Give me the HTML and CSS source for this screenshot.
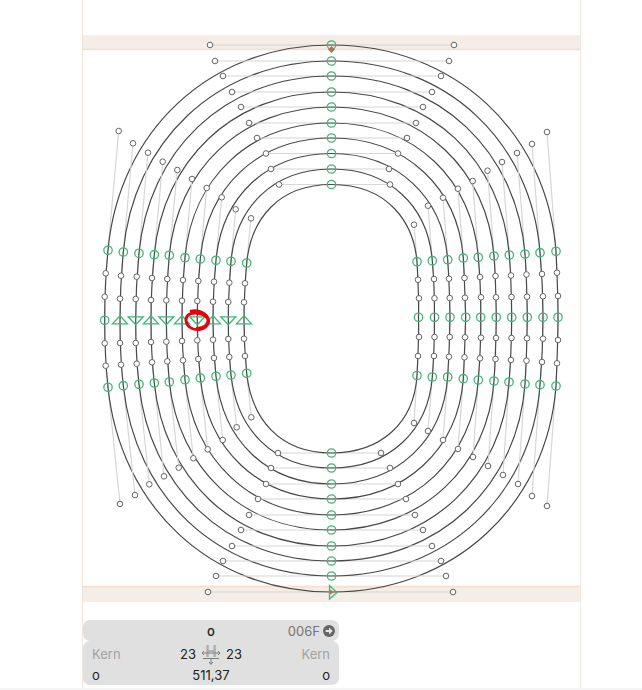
FILE: index.html
```html
<!DOCTYPE html>
<html lang="en">
<head>
<meta charset="utf-8">
<title>Glyph o</title>
<link rel="stylesheet" href="styles.css">
</head>
<body>
<main class="frame">
  <svg id="glyph" class="canvas" viewBox="83 0 497 620" width="497" height="620"></svg>
  <section class="info">
    <div class="panel panel-name">
      <span></span>
      <span class="glyph-name">o</span>
      <span class="unicode">006F
        <svg class="go" viewBox="0 0 12 12" width="12" height="12"><circle cx="6" cy="6" r="6"/><path d="M2.6 4.9H6V2.6L9.8 6 6 9.4V7.1H2.6z"/></svg>
      </span>
    </div>
    <div class="panel panel-metrics">
      <span class="kern">Kern</span>
      <span class="bearings">23
        <svg class="metric-icon" viewBox="0 0 22 22" width="22" height="22">
          <text class="metric-h" x="11" y="14" text-anchor="middle">H</text>
          <path class="metric-arrow" d="M2 10H20M4 8L2 10L4 12M18 8L20 10L18 12M3 15.500H19M11 15.500V21M9 19L11 21.500L13 19"/>
        </svg>
      23</span>
      <span class="kern kern-right">Kern</span>
      <span>o</span>
      <span class="width">511,37</span>
      <span class="right-name">o</span>
    </div>
  </section>
</main>
<div class="foot"></div>
<script src="script.js"></script>
</body>
</html>
```
FILE: styles.css
```css
html, body { margin: 0; padding: 0; background: #fff; }
body { width: 642px; height: 690px; overflow: hidden; font-family: Inter, "Liberation Sans", sans-serif; font-size: 13px; color: #222; }
.frame { width: 497px; height: 688px; margin-left: 82px; border-left: 1px solid #f6e6da; border-right: 1px solid #f6e6da; }
.canvas { display: block; }
.foot { height: 2px; background: #f5f5f5; }
.info { width: 256px; display: flex; flex-direction: column; }
.panel { background: #e0e0e0; border-radius: 7px; display: grid; grid-template-columns: 1fr auto 1fr; align-items: center; padding: 0 9px; }
.panel-name { height: 21px; }
.panel-metrics { height: 44px; grid-template-rows: 26px 16px; align-content: start; }
.glyph-name { font-weight: 500; }
.unicode { justify-self: end; display: flex; align-items: center; gap: 3px; color: #757575; margin-right: -5px; }
.go circle { fill: #666; }
.go path { fill: #e6e6e6; }
.kern { color: #a2a2a2; }
.kern-right { justify-self: end; }
.right-name { justify-self: end; }
.width { text-align: center; }
.bearings { display: flex; align-items: center; gap: 4px; }
.metric-icon { display: block; }
.metric-h { font: 700 16px "Liberation Sans", sans-serif; fill: #aeaeae; }
.metric-arrow { fill: none; stroke: #7d7d7d; stroke-width: 1; }
.band { fill: #f5ede6; }
.band-line { stroke: #f4dfcf; stroke-width: 1.5; }
.handle { stroke: #d6d6d6; stroke-width: 1.2; }
.contour { fill: none; stroke: #484848; stroke-width: 1.2; }
.off { fill: #fff; stroke: #666; stroke-width: 1; }
.node { fill: none; stroke: #3fb878; stroke-width: 1.3; }
.start { fill: #b8714f; }
.scribble { fill: none; stroke: #e8000d; stroke-width: 2.8; stroke-linecap: round; }
```
FILE: script.js
```js
var NS = 'http://www.w3.org/2000/svg';
var svg = document.getElementById('glyph');
function el(name, attrs) {
  var e = document.createElementNS(NS, name);
  for (var k in attrs) e.setAttribute(k, attrs[k]);
  svg.appendChild(e);
  return e;
}
function zip(xs, ys) { return xs.map(function (x, i) { return [x, ys[i]]; }); }
function line(a, b) { el('line', { 'class': 'handle', x1: a[0], y1: a[1], x2: b[0], y2: b[1] }); }
function c(a, b, d) { return 'C' + a.join(' ') + ' ' + b.join(' ') + ' ' + d.join(' '); }

var CX = 331.500;
var topY = [45, 61, 76, 92, 107, 123, 138, 153.500, 169, 184.500];
var botY = [592, 576, 561, 546, 530, 515, 499, 484, 468, 453];
var topL = [210, 215, 223, 232, 241, 249, 257, 266, 271, 279];
var topR = [454, 449, 441, 432, 423, 416, 407, 398, 389, 390];
var botL = [208, 216, 223, 232, 241, 249, 258, 266, 271, 278];
var botR = [453, 446, 441, 432, 423, 415, 406, 398, 390, 381];

var R = {
  sideT: zip([547, 532, 517, 502, 487.500, 472.700, 458, 443, 428, 414], [132, 144, 153, 162, 170.700, 181, 188.700, 197.700, 205.700, 224.700]),
  nodeT: zip([556, 540, 525, 509.300, 494, 478.300, 463.300, 447.700, 432.300, 417], [251.300, 252.700, 254, 255, 256, 257.300, 258, 259.700, 260.700, 261.700]),
  off1: zip([557, 542, 526.500, 511, 495.500, 480, 464.500, 449, 434, 418], [272.700, 274, 274.500, 275.500, 276, 277, 278, 278.700, 279, 279.700]),
  off2: zip([558, 543, 527, 511.500, 496, 481, 465, 449.700, 434.500, 419], [296, 296.300, 296.700, 297, 297.300, 297.300, 297.700, 298, 298.300, 298.300]),
  mid: zip([558, 543, 527.300, 511.700, 496.300, 480.700, 465.700, 450, 434.500, 418.500], [317.300, 317.300, 317.300, 317.300, 317.300, 317.300, 317.300, 317.300, 317.300, 317.300]),
  off3: zip([558, 543, 527, 511.500, 496, 481, 465, 449.700, 434.500, 419], [340, 338.700, 338.300, 338, 338, 337.700, 337.300, 337, 337, 337]),
  off4: zip([557, 542, 526.500, 511, 495.500, 480, 464.500, 449, 434, 418], [363.300, 362, 360.700, 360, 359, 358.300, 357.300, 356.700, 356, 356]),
  nodeB: zip([556, 540, 525, 509, 494, 478.300, 463.300, 447.700, 432.300, 417], [386, 384.700, 384, 382, 381, 380, 378.700, 377, 377, 375.500]),
  sideB: zip([547, 532, 518, 503, 488, 473, 458, 443, 428, 414], [506, 496, 484, 475, 466, 457, 449, 440, 431, 423])
};
var L = {
  sideT: zip([118.700, 133, 148, 162.700, 177.300, 192, 206.700, 221.700, 235.700, 251], [131, 143.300, 152.700, 161.700, 170, 179, 188, 197.300, 209.300, 218.300]),
  nodeT: zip([108, 123.300, 139, 154.300, 169.300, 185, 200.300, 216, 231, 246.700], [250.300, 252, 253.300, 254.700, 255.300, 257.700, 259, 260.300, 261.300, 263]),
  off1: zip([105.700, 121, 136.700, 152, 167.300, 183, 198.300, 214, 229.300, 245], [273.300, 275.700, 276.700, 278, 279, 280, 281, 281.700, 282.700, 283.300]),
  off2: zip([104.700, 120, 135.700, 151, 166.300, 182, 197.300, 213, 228.300, 244], [296.700, 298.700, 299, 300, 300.300, 300.700, 301, 301.700, 302, 302.300]),
  mid: zip([104.700, 120, 135.700, 151, 166.300, 182, 197.300, 213, 228.300, 244], [320.300, 320.300, 320.300, 320.300, 320.300, 320.300, 320.300, 320.300, 320.300, 320.300]),
  off3: zip([104.700, 120, 135.700, 151, 166.300, 182, 197.300, 213, 228.300, 244], [343.300, 343, 343, 342, 341.700, 341, 340.300, 339.700, 339, 338.700]),
  off4: zip([105.700, 121, 136.700, 152, 167.300, 183, 198.300, 214, 229.300, 245], [365.700, 364.700, 363.700, 362.300, 361.300, 360.300, 359, 358, 357, 356]),
  nodeB: zip([108, 123.300, 139, 154.300, 169.300, 185, 200.300, 216, 231, 246.700], [387.300, 385.700, 384.300, 383, 382, 379.700, 378, 376.300, 375, 373.300]),
  sideB: zip([120, 135, 149.300, 164, 178.700, 193.300, 207.700, 222.700, 236.700, 251.300], [504, 495, 484.300, 476.300, 467.700, 458.300, 449.300, 440, 427.300, 417.300])
};

/* metric bands */
el('rect', { 'class': 'band', x: 83, y: 35, width: 497, height: 15 });
el('rect', { 'class': 'band', x: 83, y: 586, width: 497, height: 16 });
el('line', { 'class': 'band-line', x1: 83, y1: 49.500, x2: 580, y2: 49.500 });
el('line', { 'class': 'band-line', x1: 83, y1: 586.500, x2: 580, y2: 586.500 });

var i, n = 10, off = [], nodes = [];
for (i = 0; i < n; i++) {
  var T = [CX, topY[i]], B = [CX, botY[i]];
  var tr = [topR[i], topY[i]], tl = [topL[i], topY[i]], br = [botR[i], botY[i]], bl = [botL[i], botY[i]];

  line(tl, tr); line(bl, br);
  [R, L].forEach(function (s) {
    line(s.sideT[i], s.nodeT[i]); line(s.nodeT[i], s.off1[i]); line(s.off2[i], s.mid[i]);
    line(s.mid[i], s.off3[i]); line(s.off4[i], s.nodeB[i]); line(s.nodeB[i], s.sideB[i]);
  });

  el('path', { 'class': 'contour', d: 'M' + T.join(' ') +
    c(tr, R.sideT[i], R.nodeT[i]) + c(R.off1[i], R.off2[i], R.mid[i]) +
    c(R.off3[i], R.off4[i], R.nodeB[i]) + c(R.sideB[i], br, B) +
    c(bl, L.sideB[i], L.nodeB[i]) + c(L.off4[i], L.off3[i], L.mid[i]) +
    c(L.off2[i], L.off1[i], L.nodeT[i]) + c(L.sideT[i], tl, T) + 'Z' });

  off.push(tl, tr, bl, br);
  [R, L].forEach(function (s) {
    off.push(s.sideT[i], s.off1[i], s.off2[i], s.off3[i], s.off4[i], s.sideB[i]);
    nodes.push(s.nodeT[i], s.nodeB[i]);
  });
  nodes.push(R.mid[i]);
  if (i > 0) nodes.push(B);
  nodes.push(T);
}
off.forEach(function (p) { el('circle', { 'class': 'off', cx: p[0], cy: p[1], r: 2.800 }); });
nodes.forEach(function (p) { el('circle', { 'class': 'node', cx: p[0], cy: p[1], r: 4.200 }); });

/* left-side extremes: first a circle, then alternating triangles */
el('circle', { 'class': 'node', cx: L.mid[0][0], cy: L.mid[0][1], r: 4.200 });
for (i = 1; i < n; i++) {
  var x = L.mid[i][0], y = L.mid[i][1];
  var pts = i % 2
    ? [[x, y - 4.500], [x + 7.500, y + 3.500], [x - 7.500, y + 3.500]]
    : [[x - 7.500, y - 3.500], [x + 7.500, y - 3.500], [x, y + 4.500]];
  el('polygon', { 'class': 'node', points: pts.join(' ') });
}

/* start node of the outer contour and bottom direction triangle */
el('polygon', { 'class': 'start', points: '331.500,46 335,49.500 331.500,53 328,49.500' });
el('polygon', { 'class': 'start', points: '329.500,589 334,592 329.500,595' });
el('polygon', { 'class': 'node', points: '329.500,585.500 337,592.500 329.500,599' });

/* hand-drawn mark */
el('path', { 'class': 'scribble', d: 'M191 311C197 309.500 205 312 208 318C210 323 207 328 200 329.500C193 330.500 187 327 186 321C185.500 316 189 313 195 313C202 313 207 316 208 320C208.500 325 204 328 197 328.500' });
```
